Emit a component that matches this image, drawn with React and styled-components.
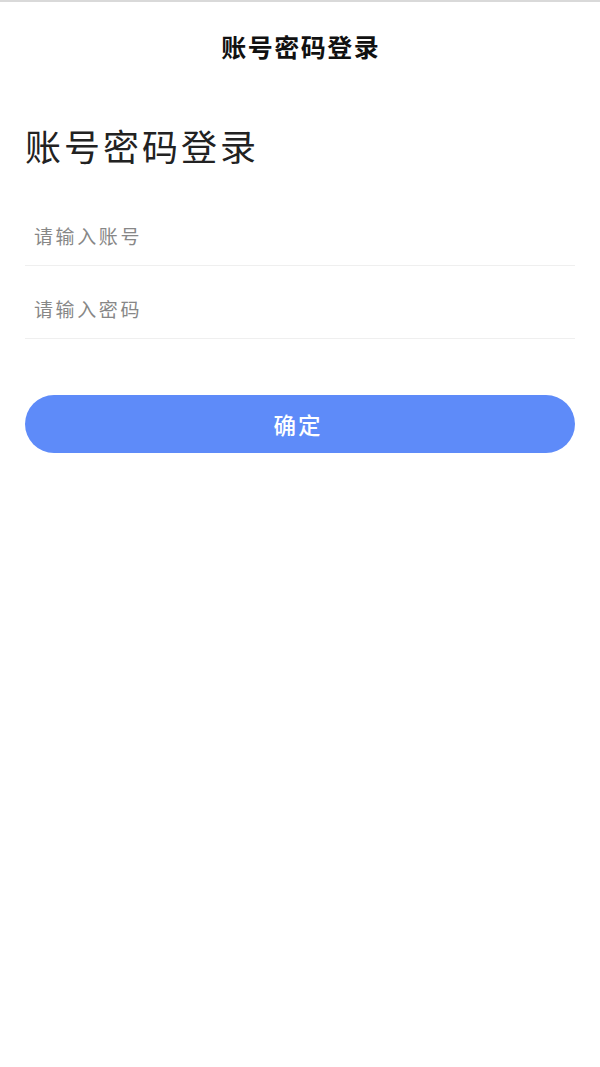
import React from "react";
import styled, { createGlobalStyle } from "styled-components";

const Global = createGlobalStyle`
  html, body { margin: 0; padding: 0; background: #ffffff; }
  body { font-family: "Noto Sans CJK SC", "Noto Sans", sans-serif; }
  * { box-sizing: border-box; }
`;

const Page = styled.div`
  min-height: 1067px;
  background: #ffffff;
  border-top: 2px solid #d9d9d9;
`;

const NavBar = styled.header`
  height: 88px;
  display: flex;
  align-items: center;
  justify-content: center;
`;

const NavTitle = styled.h1`
  margin: 0;
  font-size: 25px;
  font-weight: 700;
  letter-spacing: 1.5px;
  color: #111;
  line-height: 1;
  padding-left: 1.5px;
`;

const Content = styled.main`
  padding: 0 25px;
  display: flex;
  flex-direction: column;
`;

const Heading = styled.h2`
  margin: 34px 0 0 0;
  font-size: 36px;
  line-height: 42px;
  font-weight: 400;
  letter-spacing: 3px;
  color: #222;
`;

const Form = styled.form`
  margin-top: 27px;
  display: flex;
  flex-direction: column;
`;

const Field = styled.div`
  height: 73px;
  padding: 13px 0 0 9px;
  display: flex;
  align-items: center;
  border-bottom: 1px solid #efefef;
`;

const Input = styled.input`
  border: none;
  outline: none;
  background: transparent;
  width: 100%;
  font-family: inherit;
  font-size: 19px;
  letter-spacing: 2.6px;
  color: #333;
  padding: 0;
  &::placeholder { color: #878787; }
`;

const Submit = styled.button`
  margin-top: 56px;
  height: 58px;
  border: none;
  border-radius: 29px;
  background: #5e8bf9;
  color: #ffffff;
  font-family: inherit;
  font-size: 22.5px;
  font-weight: 500;
  letter-spacing: 2px;
  padding-left: 2px;
  cursor: pointer;
`;

export default function App() {
  return (
    <>
      <Global />
      <Page>
        <NavBar>
          <NavTitle>账号密码登录</NavTitle>
        </NavBar>
        <Content>
          <Heading>账号密码登录</Heading>
          <Form onSubmit={(e) => e.preventDefault()}>
            <Field>
              <Input type="text" placeholder="请输入账号" />
            </Field>
            <Field>
              <Input type="password" placeholder="请输入密码" />
            </Field>
            <Submit type="submit">确定</Submit>
          </Form>
        </Content>
      </Page>
    </>
  );
}
